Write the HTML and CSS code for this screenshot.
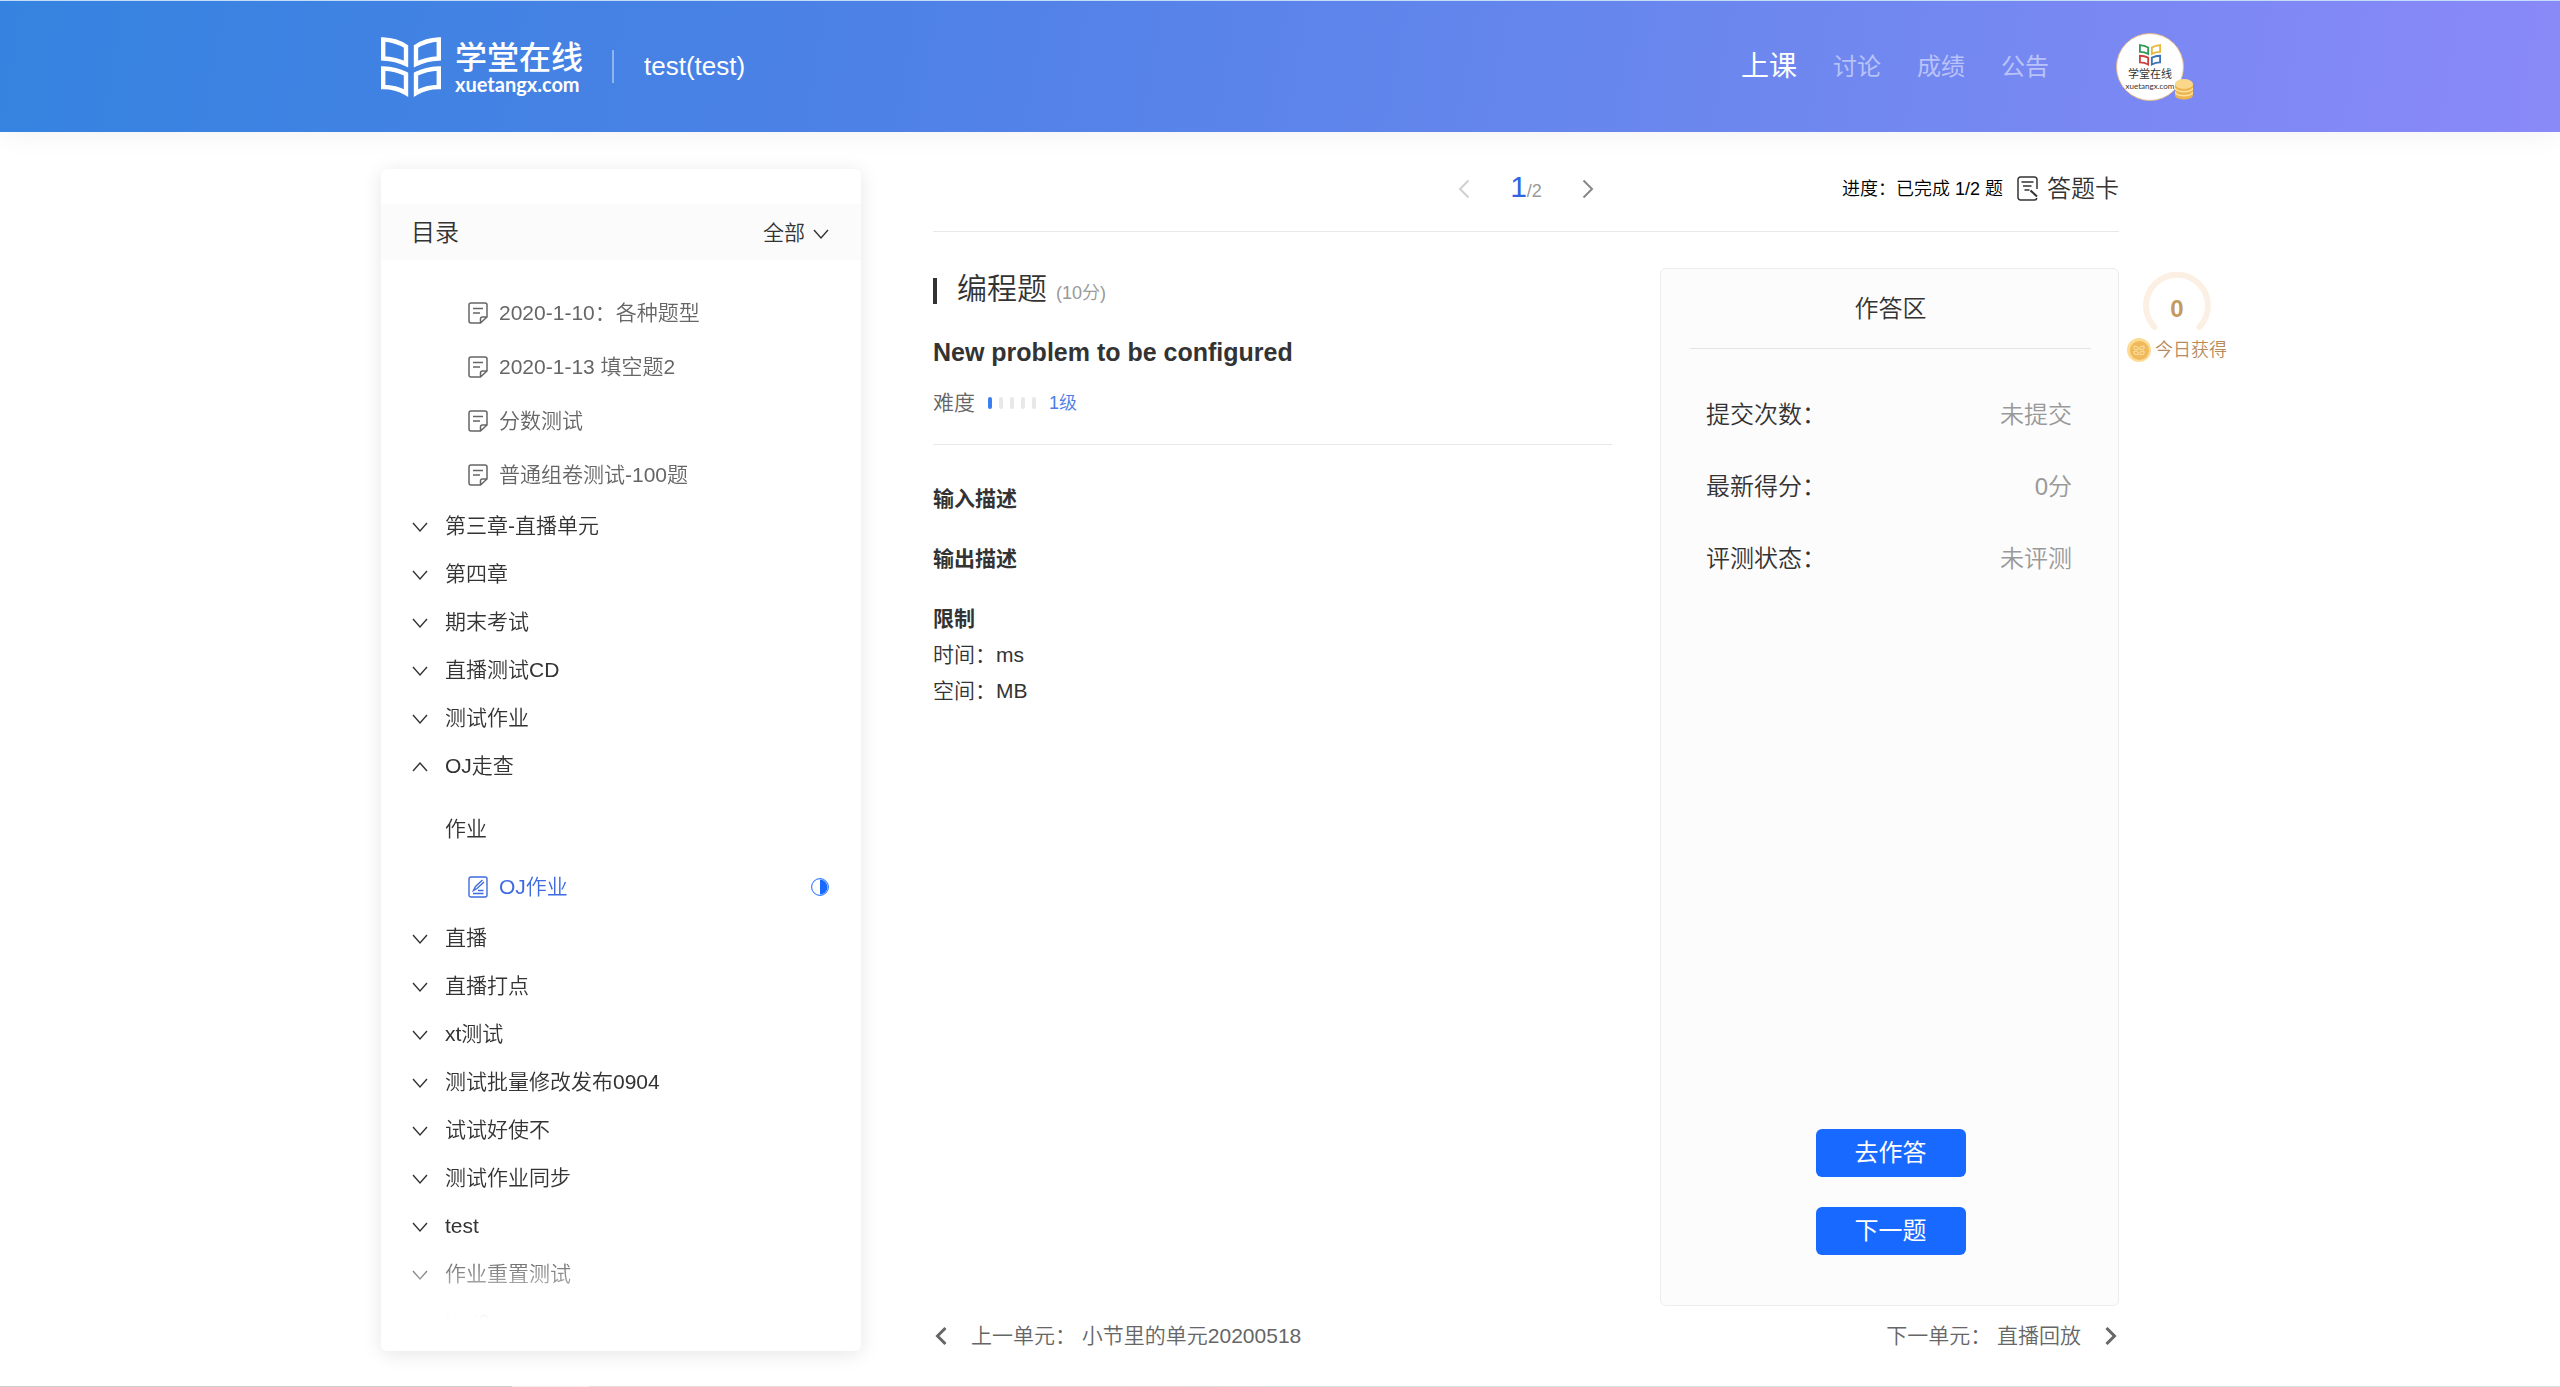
FILE: index.html
```html
<!DOCTYPE html>
<html lang="zh-CN">
<head>
<meta charset="utf-8">
<title>学堂在线 - test(test)</title>
<link rel="stylesheet" href="styles.css">
</head>
<body>
<svg class="defs" aria-hidden="true">
  <symbol id="down" viewBox="0 0 16 16"><path d="M1 5l7 8 7-8" fill="none" stroke="currentColor" stroke-width="1.400"/></symbol>
  <symbol id="up" viewBox="0 0 16 16"><path d="M1 13l7-8 7 8" fill="none" stroke="currentColor" stroke-width="1.400"/></symbol>
  <symbol id="left" viewBox="0 0 12 20"><path d="M10.500 1.500L2 10l8.500 8.500" fill="none" stroke="currentColor" stroke-width="2"/></symbol>
  <symbol id="right" viewBox="0 0 12 20"><path d="M1.500 1.500L10 10l-8.500 8.500" fill="none" stroke="currentColor" stroke-width="2"/></symbol>
  <symbol id="prev" viewBox="0 0 12 20"><path d="M10.500 2L2.500 10l8 8" fill="none" stroke="currentColor" stroke-width="3"/></symbol>
  <symbol id="next" viewBox="0 0 12 20"><path d="M1.500 2l8 8-8 8" fill="none" stroke="currentColor" stroke-width="3"/></symbol>
  <symbol id="note" viewBox="0 0 20 22"><path d="M12.500 21H3a2 2 0 0 1-2-2V3a2 2 0 0 1 2-2h14a2 2 0 0 1 2 2v12zM12.500 21v-4a2 2 0 0 1 2-2H19M5 6.500h10M5 11h7" fill="none" stroke="currentColor" stroke-width="1.500"/></symbol>
  <symbol id="edit" viewBox="0 0 20 22"><path d="M3 1h14a2 2 0 0 1 2 2v16a2 2 0 0 1-2 2H3a2 2 0 0 1-2-2V3a2 2 0 0 1 2-2zM14.500 4l-7 6.500-2 4 3.500-2 7-6.500M10 14.500h5.500M5 17.500h10.500" fill="none" stroke="currentColor" stroke-width="1.400"/></symbol>
  <symbol id="card" viewBox="0 0 22 26"><path d="M20 13V3.500A2.500 2.500 0 0 0 17.500 1h-14A2.500 2.500 0 0 0 1 3.500v18A2.500 2.500 0 0 0 3.500 24h14a2.500 2.500 0 0 0 2.400-2M4.500 6h12M6 10h8.500M7.500 14h5" fill="none" stroke="currentColor" stroke-width="1.500"/><path d="M13.500 14.500l6.500 6" fill="none" stroke="currentColor" stroke-width="2"/></symbol>
</svg>

<header class="header">
  <div class="header-inner">
    <a class="logo" href="#">
      <svg class="logo-mark" viewBox="0 0 60 60" fill="none" stroke="#fff" stroke-width="4.400">
        <path d="M2.200 2.500Q15 3 25 9.500V27Q15 22 2.200 21.500zM57.800 2.500Q45 3 35 9.500V27Q45 22 57.800 21.500zM2.200 31.500Q15 32 25 37V56Q15 50 2.200 50zM57.800 31.500Q45 32 35 37V56Q45 50 57.800 50z"/>
      </svg>
      <span class="logo-words"><span class="logo-cn">学堂在线</span><span class="logo-en">xuetangx.com</span></span>
    </a>
    <span class="course">test(test)</span>
    <nav class="nav">
      <a class="active" href="#">上课</a>
      <a href="#">讨论</a>
      <a href="#">成绩</a>
      <a href="#">公告</a>
    </nav>
    <a class="avatar" href="#" aria-label="个人中心">
      <svg class="avatar-mark" viewBox="0 0 60 60" fill="none" stroke-width="5">
        <path stroke="#2f9b57" d="M2.500 3Q15 4 25 9.500V27Q15 22 2.500 21.500z"/>
        <path stroke="#e8b93c" d="M57.500 3Q45 4 35 9.500V27Q45 22 57.500 21.500z"/>
        <path stroke="#c9433c" d="M2.500 32Q15 32 25 37V56Q15 50 2.500 50z"/>
        <path stroke="#3a74b4" d="M57.500 32Q45 32 35 37V56Q45 50 57.500 50z"/>
      </svg>
      <span class="avatar-cn">学堂在线</span>
      <span class="avatar-en">xuetangx.com</span>
      <svg class="coins" viewBox="0 0 18 21">
        <path d="M0 5v11c0 6 18 6 18 0V5z" fill="#eeb44f"/>
        <path d="M0 9c2 5 16 5 18 0M0 13c2 5 16 5 18 0" fill="none" stroke="#fbe2a0" stroke-width="1.500"/>
        <ellipse cx="9" cy="5" rx="9" ry="5" fill="#fad78b"/>
      </svg>
    </a>
  </div>
</header>

<div class="page">
  <aside class="sidebar">
    <div class="side-head">
      <h2>目录</h2>
      <label class="filter">
        <select aria-label="筛选"><option>全部</option></select>
        <svg class="chev"><use href="#down"/></svg>
      </label>
    </div>
    <div class="tree">
      <a class="leaf" href="#"><svg><use href="#note"/></svg>2020-1-10：各种题型</a>
      <a class="leaf" href="#"><svg><use href="#note"/></svg>2020-1-13 填空题2</a>
      <a class="leaf" href="#"><svg><use href="#note"/></svg>分数测试</a>
      <a class="leaf" href="#"><svg><use href="#note"/></svg>普通组卷测试-100题</a>
      <button class="chapter"><svg class="chev"><use href="#down"/></svg>第三章-直播单元</button>
      <button class="chapter"><svg class="chev"><use href="#down"/></svg>第四章</button>
      <button class="chapter"><svg class="chev"><use href="#down"/></svg>期末考试</button>
      <button class="chapter"><svg class="chev"><use href="#down"/></svg>直播测试CD</button>
      <button class="chapter"><svg class="chev"><use href="#down"/></svg>测试作业</button>
      <button class="chapter" aria-expanded="true"><svg class="chev"><use href="#up"/></svg>OJ走查</button>
      <div class="section">作业</div>
      <a class="leaf current" href="#"><svg><use href="#edit"/></svg>OJ作业
        <svg class="half" viewBox="0 0 18 18"><circle cx="9" cy="9" r="8.400" fill="none" stroke="#1769ff"/><path d="M9 1.500a7.500 7.500 0 0 1 0 15z" fill="#1769ff"/></svg>
      </a>
      <button class="chapter"><svg class="chev"><use href="#down"/></svg>直播</button>
      <button class="chapter"><svg class="chev"><use href="#down"/></svg>直播打点</button>
      <button class="chapter"><svg class="chev"><use href="#down"/></svg>xt测试</button>
      <button class="chapter"><svg class="chev"><use href="#down"/></svg>测试批量修改发布0904</button>
      <button class="chapter"><svg class="chev"><use href="#down"/></svg>试试好使不</button>
      <button class="chapter"><svg class="chev"><use href="#down"/></svg>测试作业同步</button>
      <button class="chapter"><svg class="chev"><use href="#down"/></svg>test</button>
      <button class="chapter"><svg class="chev"><use href="#down"/></svg>作业重置测试</button>
      <button class="chapter"><svg class="chev"><use href="#down"/></svg>test2</button>
    </div>
  </aside>

  <main class="main">
    <div class="topbar">
      <div class="pager">
        <button class="arrow off" aria-label="上一题" disabled><svg><use href="#left"/></svg></button>
        <span class="count"><b>1</b>/2</span>
        <button class="arrow" aria-label="下一题"><svg><use href="#right"/></svg></button>
      </div>
      <div class="status">
        <span class="progress">进度：已完成 1/2 题</span>
        <button class="sheet"><svg><use href="#card"/></svg>答题卡</button>
      </div>
    </div>

    <div class="work">
      <article class="problem">
        <h1>编程题<small>(10分)</small></h1>
        <h2>New problem to be configured</h2>
        <div class="level">难度<span class="bars"><i class="on"></i><i></i><i></i><i></i><i></i></span><em>1级</em></div>
        <div class="desc">
          <h3>输入描述</h3>
          <h3>输出描述</h3>
          <h3>限制</h3>
          <p>时间：ms</p>
          <p>空间：MB</p>
        </div>
      </article>
      <section class="answer">
        <h2>作答区</h2>
        <dl>
          <div><dt>提交次数：</dt><dd>未提交</dd></div>
          <div><dt>最新得分：</dt><dd>0分</dd></div>
          <div><dt>评测状态：</dt><dd>未评测</dd></div>
        </dl>
        <div class="actions">
          <button>去作答</button>
          <button>下一题</button>
        </div>
      </section>
    </div>

    <nav class="units">
      <a href="#"><svg><use href="#prev"/></svg><span>上一单元： 小节里的单元20200518</span></a>
      <a href="#"><span>下一单元： 直播回放</span><svg><use href="#next"/></svg></a>
    </nav>

    <div class="reward">
      <div class="gauge">
        <svg viewBox="0 0 68 62"><path d="M11.500 57A31 31 0 1 1 56.500 57" fill="none" stroke="#fbf0e3" stroke-width="6" stroke-linecap="round"/></svg>
        <b>0</b>
      </div>
      <div class="today">
        <svg viewBox="0 0 24 24"><circle cx="12" cy="12" r="12" fill="#fbdc92"/><circle cx="12.500" cy="12.500" r="9.500" fill="#f0b95c"/><path d="M7 8l4 1v3l-4-1zM17 8l-4 1v3l4-1zM7 13l4 1v3l-4-1zM17 13l-4 1v3l4-1z" fill="none" stroke="#fbe0a0"/></svg>
        今日获得
      </div>
    </div>
  </main>
</div>
</body>
</html>
```

FILE: styles.css
```css
* { box-sizing: border-box; }

body {
  margin: 0;
  min-height: 100vh;
  display: flex;
  flex-direction: column;
  background: linear-gradient(90deg, #ccc 20%, #f3ece2 20%, #f3ece2 23%, #ead9d0 23%, #ead9d0 44%, #dbe1e0 50%) bottom / 100% 1px no-repeat, #fff;
  color: #333;
  font: 21px/36px "Liberation Sans", "Noto Sans CJK SC", sans-serif;
  font-weight: 350;
}

h1, h2, h3, p, dl, dd { margin: 0; }
a { color: inherit; text-decoration: none; }
button, select {
  margin: 0;
  padding: 0;
  border: 0;
  background: none;
  color: inherit;
  font: inherit;
  cursor: pointer;
}
.defs { display: none; }

/* header */
.header {
  height: 132px;
  border-top: 1px solid #c3ddf8;
  background: linear-gradient(100deg, #3583e0, #4d81e6 34%, #6a87ee 66%, #8a89f8);
  box-shadow: 0 2px 27px rgba(0, 0, 0, .06);
  color: #fff;
}
.header-inner {
  max-width: 1808px;
  height: 100%;
  margin: 0 auto;
  padding-left: 5px;
  display: flex;
  align-items: center;
}
.logo { display: flex; align-items: center; gap: 14px; }
.logo-mark { width: 60px; height: 60px; }
.logo-words { padding-top: 3px; display: flex; flex-direction: column; }
.logo-cn { font-size: 32px; line-height: 32px; font-weight: 500; }
.logo-en { font: bold 20px/20px Lato, sans-serif; }
.course {
  margin-left: 29px;
  padding-left: 30px;
  border-left: 2px solid rgba(255, 255, 255, .4);
  font-size: 26px;
  line-height: 33px;
}
.nav { margin-left: auto; display: flex; align-items: center; gap: 36px; font-size: 24px; font-weight: 400; }
.nav a { color: rgba(255, 255, 255, .5); }
.nav .active { color: #fff; font-size: 28px; }
.avatar {
  position: relative;
  width: 68px;
  height: 68px;
  margin-left: 67px;
  padding-top: 10px;
  border: 1px solid #e3b98d;
  border-radius: 50%;
  background: #fff;
  color: #333;
  display: flex;
  flex-direction: column;
  align-items: center;
}
.avatar-mark { width: 22px; height: 22px; }
.avatar-cn { font-size: 11px; line-height: 16px; font-weight: 400; }
.avatar-en { font: 8px/8px Lato, sans-serif; }
.coins { position: absolute; right: -10px; bottom: 0; width: 18px; height: 21px; }

/* page columns */
.page {
  flex: 1;
  width: 100%;
  max-width: 1798px;
  margin: 0 auto;
  padding: 37px 60px 21px 0;
  display: grid;
  grid-template-columns: 480px 1fr;
  gap: 72px;
}

/* catalogue */
.sidebar {
  height: calc(100vh - 205px);
  padding: 35px 0 32px;
  border-radius: 6px;
  background: #fff;
  box-shadow: 0 3px 20px rgba(0, 0, 0, .1);
  display: flex;
  flex-direction: column;
}
.side-head {
  flex: none;
  height: 56px;
  padding: 2px 32px 0 30px;
  background: #fbfbfb;
  display: flex;
  align-items: center;
  justify-content: space-between;
}
.side-head h2 { font-size: 24px; font-weight: 350; }
.filter { display: flex; align-items: center; gap: 8px; }
.filter select { appearance: none; }
.chev { flex: none; width: 16px; height: 16px; }
.tree {
  flex: 1;
  min-height: 0;
  padding-top: 26px;
  overflow: hidden;
  mask-image: linear-gradient(#000 calc(100% - 80px), transparent);
}
.leaf {
  height: 54px;
  padding: 0 32px 0 87px;
  display: flex;
  align-items: center;
  gap: 11px;
  color: #666;
}
.leaf svg { width: 20px; height: 22px; }
.leaf .half { width: 18px; height: 18px; margin-left: auto; }
.current { color: #3f6be0; }
.chapter {
  width: 100%;
  height: 48px;
  padding: 0 32px 0 31px;
  display: flex;
  align-items: center;
  gap: 17px;
}
.section { height: 70px; padding: 21px 0 0 64px; }

/* question area */
.main { position: relative; display: flex; flex-direction: column; }
.topbar {
  height: 63px;
  padding-bottom: 26px;
  border-bottom: 1px solid #e8e8e8;
  display: grid;
  grid-template-columns: 1fr auto 1fr;
  align-items: center;
}
.pager { grid-column: 2; display: flex; align-items: center; gap: 40px; }
.arrow { display: flex; color: #888; }
.arrow.off { color: #d0d0d0; }
.arrow svg { width: 12px; height: 20px; }
.count { font-size: 18px; color: #999; }
.count b { font-size: 30px; font-weight: 400; color: #3164e0; }
.status { display: flex; justify-content: flex-end; align-items: center; gap: 14px; }
.progress { font-size: 18px; color: #000; }
.sheet { display: flex; align-items: center; gap: 8px; font-size: 24px; }
.sheet svg { width: 22px; height: 26px; }

.work {
  flex: 1;
  padding-top: 36px;
  display: grid;
  grid-template-columns: 1fr 459px;
  gap: 48px;
}
.problem h1 {
  display: flex;
  align-items: baseline;
  font-size: 30px;
  line-height: 42px;
  font-weight: 350;
}
.problem h1::before {
  content: "";
  align-self: center;
  width: 4px;
  height: 26px;
  margin-right: 20px;
  background: #333;
}
.problem small { margin-left: 9px; font-size: 18px; color: #999; }
.problem h2 { margin-top: 20px; font-size: 25px; font-weight: 700; }
.level {
  padding: 15px 0 23px;
  border-bottom: 1px solid #e8e8e8;
  color: #666;
  display: flex;
  align-items: center;
}
.bars { margin: 0 13px 0 13px; display: flex; gap: 7px; }
.bars i { width: 4px; height: 12px; border-radius: 2px; background: #e8e8e8; }
.bars .on { background: #3b7df2; }
.level em { font-size: 18px; font-style: normal; color: #4d7de6; }
.desc { padding-top: 36px; }
.desc h3 { margin-bottom: 24px; font-size: 21px; font-weight: 700; }
.desc h3:last-of-type { margin-bottom: 0; }

.answer {
  padding: 22px 27px 50px 29px;
  border: 1px solid #ececec;
  border-radius: 6px;
  background: #fcfcfc;
  font-size: 24px;
  display: flex;
  flex-direction: column;
}
.answer h2 {
  padding-bottom: 21px;
  border-bottom: 1px solid #e4e4e4;
  font-size: 24px;
  font-weight: 350;
  text-align: center;
}
.answer dl { padding: 48px 19px 0 16px; display: grid; gap: 36px; }
.answer dl div { display: flex; justify-content: space-between; }
.answer dd { color: #999; }
.actions { margin-top: auto; display: flex; flex-direction: column; align-items: center; gap: 30px; }
.actions button {
  width: 150px;
  height: 48px;
  border-radius: 6px;
  background: #1769ff;
  color: #fff;
  font-weight: 400;
}

.units { height: 60px; display: flex; justify-content: space-between; align-items: center; color: #666; }
.units a { display: flex; align-items: center; gap: 24px; padding: 0 2px; }
.units svg { width: 12px; height: 20px; }

/* daily coins, hung outside the right edge of the column */
.reward { position: absolute; top: 101px; left: calc(100% + 8px); width: 100px; }
.gauge { display: grid; place-items: center; }
.gauge svg, .gauge b { grid-area: 1 / 1; }
.gauge svg { width: 68px; height: 62px; }
.gauge b { padding-top: 16px; font-size: 24px; line-height: 24px; font-weight: 700; color: #c39a60; }
.today { display: flex; align-items: center; gap: 4px; font-size: 18px; color: #b88a5c; white-space: nowrap; }
.today svg { width: 24px; height: 24px; }
```
